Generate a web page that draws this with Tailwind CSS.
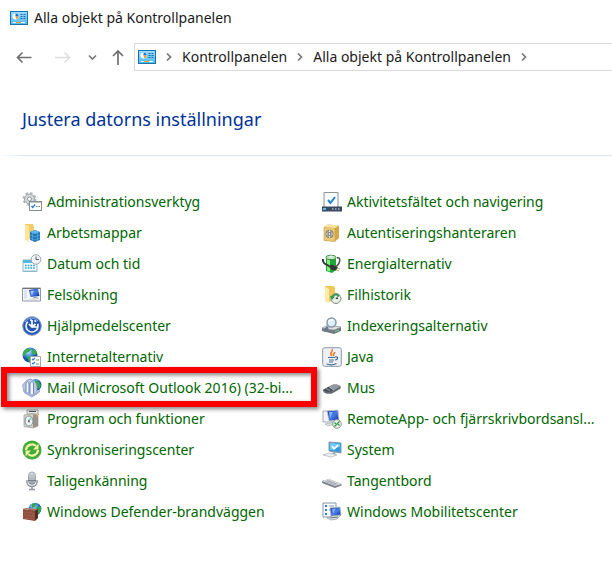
<!DOCTYPE html>
<html lang="sv">
<head>
<meta charset="utf-8">
<meta name="viewport" content="width=device-width, initial-scale=1">
<title>Alla objekt på Kontrollpanelen</title>
<script src="https://cdn.jsdelivr.net/npm/@tailwindcss/browser@4"></script>
</head>
<body class="min-h-screen overflow-x-hidden bg-white font-['Noto_Sans','Open_Sans',sans-serif] text-sm text-[#1a1a1a]">
<svg class="absolute h-0 w-0" aria-hidden="true">
  <defs>
    <linearGradient id="sky" x2="0" y2="1"><stop stop-color="#9bdcff"/><stop offset="1" stop-color="#55b9ef"/></linearGradient>
    <linearGradient id="screen" x2="1" y2="1"><stop stop-color="#0b2a9c"/><stop offset=".5" stop-color="#4a7fe6"/><stop offset="1" stop-color="#0a2aa5"/></linearGradient>
    <linearGradient id="steel" x2="0" y2="1"><stop stop-color="#f4f6f8"/><stop offset="1" stop-color="#8d959e"/></linearGradient>
    <radialGradient id="globe" cx=".4" cy=".3"><stop stop-color="#bfe6fb"/><stop offset=".6" stop-color="#3d8fd6"/><stop offset="1" stop-color="#15539f"/></radialGradient>
    <symbol id="panel" viewBox="0 0 18 14">
      <rect x=".5" y=".5" width="17" height="13" fill="url(#sky)" stroke="#1673ad"/>
      <circle cx="5.5" cy="5.5" r="3" fill="#fff"/><path d="M5.5 5.5V2.5a3 3 0 0 1 3 3z" fill="#1f6fd0"/><path d="M5.5 5.5h3a3 3 0 0 1-2 2.8z" fill="#ee9b21"/>
      <path d="M10.5 3.5h2m1 0h2m-5 2h2m1 0h2m-5 2h2m1 0h2" stroke="#176eaf"/>
      <path d="M3 11.5h3m5 0h4" stroke="#fff"/><path d="M6 11.5h5" stroke="#f3a11f"/>
    </symbol>
    <symbol id="chev" viewBox="0 0 6 10"><path d="M1 1.5 4.5 5 1 8.5" fill="none" stroke="#777" stroke-width="1.7"/></symbol>
  </defs>
</svg>

<header>
  <div class="flex h-9 items-center gap-1.5 pl-2.5">
    <svg class="h-3.5 w-[18px]"><use href="#panel"/></svg>
    <h1>Alla objekt på Kontrollpanelen</h1>
  </div>
  <nav class="flex items-center pt-[7px]" aria-label="Navigering">
    <button type="button" aria-label="Bakåt" class="ml-4"><svg class="h-4 w-4" viewBox="0 0 16 16" fill="none" stroke="#707070" stroke-width="1.7"><path d="M15.500 8.500H1.500M6.500 3.500l-5 5 5 5"/></svg></button>
    <button type="button" aria-label="Framåt" disabled class="ml-[23px]"><svg class="h-4 w-4" viewBox="0 0 16 16" fill="none" stroke="#dedede" stroke-width="1.7"><path d="M0 8.500h14M9.500 3.500l5 5-5 5"/></svg></button>
    <button type="button" aria-label="Tidigare platser" class="ml-[17px]"><svg class="h-4 w-2.5" viewBox="0 0 10 16" fill="none" stroke="#777" stroke-width="1.700"><path d="m1 6.500 3.500 3.500L8 6.500"/></svg></button>
    <button type="button" aria-label="Upp" class="ml-3.5"><svg class="h-4 w-3" viewBox="0 0 12 16" fill="none" stroke="#707070" stroke-width="1.7"><path d="M6 16V2M1 7l5-5 5 5"/></svg></button>
    <div class="ml-2.5 flex h-7 flex-1 items-center border border-r-0 border-[#d9d9d9] pl-[3px]">
      <svg class="h-3.5 w-[18px]"><use href="#panel"/></svg>
      <svg class="mx-2.5 h-2.5 w-1.5"><use href="#chev"/></svg>
      <a href="#">Kontrollpanelen</a>
      <svg class="mx-2.5 h-2.5 w-1.5"><use href="#chev"/></svg>
      <a href="#">Alla objekt på Kontrollpanelen</a>
      <svg class="mx-2.5 h-2.5 w-1.5"><use href="#chev"/></svg>
    </div>
  </nav>
</header>

<main>
  <h2 class="pl-[22px] pt-8 text-lg leading-8 text-[#003399]">Justera datorns inställningar</h2>
  <div class="mt-5 h-px bg-linear-to-r from-white to-[#d6e5f5] to-[24px]"></div>
  <ul class="grid grid-cols-[300px_1fr] whitespace-nowrap pl-[22px] pt-[30px] text-[#006600]">
    <li><a href="#" class="flex h-[31px] items-center gap-[5px]"><svg class="h-5 w-5 shrink-0" viewBox="0 0 20 20"><circle cx="7.500" cy="7" r="5" fill="#d3d7da" stroke="#9da4a9"/><circle cx="7.500" cy="7" r="6" fill="none" stroke="#aab0b5" stroke-width="1.800" stroke-dasharray="2.400 2.300"/><circle cx="7.500" cy="7" r="2" fill="#fff" stroke="#999"/><rect x="7.500" y="9.500" width="12" height="9" fill="#fff" stroke="#858d94"/><path d="M7.500 10h12" stroke="#858d94"/><path d="m9.500 14 1.200 1.500 2.300-3" fill="none" stroke="#247cc8" stroke-width="1.300"/><path d="M14 14.500h4" stroke="#777" stroke-dasharray="1.500 1"/></svg>Administrationsverktyg</a></li>
    <li><a href="#" class="flex h-[31px] items-center gap-[5px]"><svg class="h-5 w-5 shrink-0" viewBox="0 0 20 20"><path d="M2 .5h14v15H2z" fill="#fdfdfd" stroke="#8d949b"/><path d="m6 8 2.500 3L13 5" fill="none" stroke="#1785dc" stroke-width="2"/><path d="M0 14.500h20v5H0z" fill="#39495f"/><path d="M1 17h3" stroke="#6fb3ea" stroke-width="2"/><path d="M10 17h9" stroke="#a8b6c8" stroke-width="1.500" stroke-dasharray="1.500 1.500"/></svg>Aktivitetsfältet och navigering</a></li>
    <li><a href="#" class="flex h-[31px] items-center gap-[5px]"><svg class="h-5 w-5 shrink-0" viewBox="0 0 20 20"><path d="M3 1h8l1 3v11l-9 2z" fill="#f4cc68"/><path d="M3 1.500 7 3v16l-4-2.500z" fill="#ffe49a"/><path d="m8 9 5-2 5 2v8l-5 2-5-2z" fill="#1c78bd"/><path d="m8 9 5-2 5 2-5 2z" fill="#66b6e7"/><path d="m8 12 5 2 5-2M8 15l5 2 5-2M10.500 10v8m5-8v8" fill="none" stroke="#61acdd" stroke-width=".7"/></svg>Arbetsmappar</a></li>
    <li><a href="#" class="flex h-[31px] items-center gap-[5px]"><svg class="h-5 w-5 shrink-0" viewBox="0 0 20 20"><path d="m2 4 4-2.500 11 1V15l-4 3.500-11-1z" fill="#d3a948"/><path d="m2 4 11 1v13.500l-11-1z" fill="#e9ca78" stroke="#c79f4a" stroke-width=".6"/><path d="m2 4 4-2.500 11 1L13 5z" fill="#f8e5a6"/><circle cx="7.500" cy="11" r="3.800" fill="#b5b0a0" stroke="#777263" stroke-width=".8"/><circle cx="7.500" cy="11" r="1.500" fill="#eee" stroke="#555" stroke-width=".8"/><path d="M7.500 7v2m0 4v2m-4-4h2m4 0h2" stroke="#eee" stroke-width=".7"/></svg>Autentiseringshanteraren</a></li>
    <li><a href="#" class="flex h-[31px] items-center gap-[5px]"><svg class="h-5 w-5 shrink-0" viewBox="0 0 20 20"><path d="M1 6h14v11.500H1z" fill="#eefaff" stroke="#8cb9ca"/><path d="M1 6h14v3H1z" fill="#55b8dc"/><path d="M3 11.500h10m-10 2.500h10" stroke="#45a5cd" stroke-width="1.700" stroke-dasharray="1.700 1"/><path d="M2 16.500h12" stroke="#bedfea"/><circle cx="14" cy="5.500" r="4.800" fill="#f0f2f4" stroke="#9ea6ad"/><path d="M14 2.500v3h3" fill="none" stroke="#58616a"/></svg>Datum och tid</a></li>
    <li><a href="#" class="flex h-[31px] items-center gap-[5px]"><svg class="h-5 w-5 shrink-0" viewBox="0 0 20 20"><path d="M4 4.500 14 3v13l-4 3-6-2z" fill="#20a637"/><path d="M5 5v11.500l3 1V5z" fill="#83ec80"/><ellipse cx="9" cy="3.500" rx="5" ry="2.200" fill="#b9e6b7" stroke="#378644"/><ellipse cx="9" cy="2.600" rx="2" ry="1.200" fill="#e8eeea"/><path d="M1 5c-.5 4 2 5 6 7" fill="none" stroke="#303a34" stroke-width="2"/><path d="M15 4c4-2 4 6-2 9" fill="none" stroke="#4a544e" stroke-width="1.500"/><path d="m6 12 4-1.500 6 3-2 3-4-.5z" fill="#343936"/><path d="m15 14 3 1m-4 1 3 1" stroke="#c0b578" stroke-width="1.200"/></svg>Energialternativ</a></li>
    <li><a href="#" class="flex h-[31px] items-center gap-[5px]"><svg class="h-5 w-5 shrink-0" viewBox="0 0 20 20"><path d="M.5 3h18v13H.5z" fill="#f5f7f9" stroke="#8f979f"/><path d="M1 3.500h17" stroke="#68717b"/><path d="m7 5 9-1.500 1.500 7.500-9 1z" fill="url(#screen)"/><path d="m8 6 4-.5-2 5z" fill="#a4c4fa"/><path d="m11 12 3-.5 3 2-5 1z" fill="#9ca6b1"/><path d="m6 14 8-1 2 1-8 1.500z" fill="#dce1e6"/><path d="M2 5h3v9H2z" fill="#dce5ef"/></svg>Felsökning</a></li>
    <li><a href="#" class="flex h-[31px] items-center gap-[5px]"><svg class="h-5 w-5 shrink-0" viewBox="0 0 20 20"><path d="M3 1h9l1 2v13l-9 1z" fill="#efc75d"/><path d="M3 1.500 7 4v14l-4-2z" fill="#ffe9a6"/><circle cx="14" cy="13.500" r="5" fill="#e5eee8" stroke="#7f8d86"/><path d="M10 13a4 4 0 0 1 7-2" fill="none" stroke="#2d984a" stroke-width="1.700"/><path d="m8 11 5 .5-3 3.500z" fill="#2d984a"/><path d="M14 13.500 16.500 11M14 13.500h2" stroke="#444"/></svg>Filhistorik</a></li>
    <li><a href="#" class="flex h-[31px] items-center gap-[5px]"><svg class="h-5 w-5 shrink-0" viewBox="0 0 20 20"><circle cx="10" cy="10" r="9.300" fill="#2455b5" stroke="#8b9dbb"/><circle cx="10" cy="10" r="6" fill="none" stroke="#edf4ff" stroke-width="1.700" stroke-dasharray="23 2.500 2 2.500 2 2.500"/><path d="M10 4v7m-3-3 3 3 3.500-3M10 11h5" fill="none" stroke="#fff" stroke-width="1.700"/><path d="M3 6a8 8 0 0 1 13-1" fill="none" stroke="#88b6ee"/></svg>Hjälpmedelscenter</a></li>
    <li><a href="#" class="flex h-[31px] items-center gap-[5px]"><svg class="h-5 w-5 shrink-0" viewBox="0 0 20 20"><path d="m0 12 6-3 13 2v4l-7 3L0 15z" fill="#737b83"/><path d="m0 12 6-3 13 2-7 3z" fill="#dce1e5" stroke="#969da4" stroke-width=".6"/><path d="m13 15.500 4-1.500" stroke="#6ad084"/><path d="m6 11-4 4" stroke="#677a91" stroke-width="2.500"/><circle cx="9.500" cy="6.500" r="4.500" fill="#d9f0ff" stroke="#8797aa" stroke-width="1.500"/><path d="M7 6a3 3 0 0 1 4-2" fill="none" stroke="#fff" stroke-width="1.500"/></svg>Indexeringsalternativ</a></li>
    <li><a href="#" class="flex h-[31px] items-center gap-[5px]"><svg class="h-5 w-5 shrink-0" viewBox="0 0 20 20"><circle cx="8" cy="8" r="7.500" fill="url(#globe)"/><path d="M2 4c3-3 5-3 7-2L7 5 4 6 2 9C0 8 1 6 2 4zm3 5 5 1-1 4-2 1zm7-7c2 1 3 3 3 5l-3 1-2-3z" fill="#38ae45"/><path d="M8.500 9.500h10v10h-10z" fill="#fff" stroke="#a0a7ae"/><path d="m10 12 1 1 2-2m-3 5 1 1 2-2" fill="none" stroke="#267cc4" stroke-width="1.200"/><path d="M14 13h3m-3 4h3" stroke="#888"/></svg>Internetalternativ</a></li>
    <li><a href="#" class="flex h-[31px] items-center gap-[5px]"><svg class="h-5 w-5 shrink-0" viewBox="0 0 20 20"><rect x=".7" y=".7" width="18.600" height="18.600" rx="2" fill="#eef1f4" stroke="#8798aa"/><path d="M10 9C6 6 12 5 10 2m2 7c-2-2 1-3 1-4" fill="none" stroke="#ef7522" stroke-width="1.500"/><path d="M6 10.500h7m-6 2.500h5m-5 2h4M4.500 17c3 1 7 1 10-.5M13 10c4-1 3 3 0 3" fill="none" stroke="#416d93" stroke-width="1.200"/></svg>Java</a></li>
    <li class="relative"><a href="#" class="flex h-[31px] items-center gap-[5px]"><svg class="h-5 w-5 shrink-0" viewBox="0 0 20 20"><circle cx="13.500" cy="7" r="6" fill="url(#globe)"/><path d="m13 2 3 1 3 4-2 4-3-2-1-3z" fill="#3aa351"/><path d="M.5 7 5 2l4-1 5 4 1 4v7l-5 2.500L2 14z" fill="#b9c8e4" stroke="#8998b9" stroke-width=".7"/><path d="M4 14V6c.5-3 3-3 3 0v9M8 16V6c.5-3 3.500-3 3.500 0v10" fill="#f4f7fd" stroke="#7088bd"/><path d="m1 11 8 6 6-3 3-3v3l-8 5.500L2 15z" fill="#9db0d2"/></svg>Mail (Microsoft Outlook 2016) (32-bi...</a><div class="pointer-events-none absolute -bottom-1 -left-[21px] -top-[5px] right-[5px] border-6 border-[#fb0000] drop-shadow-[2px_2px_2px_rgba(0,0,0,0.5)]"></div></li>
    <li><a href="#" class="flex h-[31px] items-center gap-[5px]"><svg class="h-5 w-5 shrink-0" viewBox="0 0 20 20"><path d="m1 12 9-5c4-1 8 0 9 2l-1 2-8 4.500c-4 1-9 0-9-3.500z" fill="#646b73"/><path d="m1 12 9-5c4-1 7-.5 8 1.500l-8 5c-3 1-7 1-9-1.500z" fill="#8f979f"/><path d="m1 12 5.500-3.200 5 3.500-2 1.200c-3 1-7 .5-8.500-1.500z" fill="#444c55"/><path d="m6.500 8.500 5 3.500M4 10.500l4 2" stroke="#c1c6cc" stroke-width=".7"/></svg>Mus</a></li>
    <li><a href="#" class="flex h-[31px] items-center gap-[5px]"><svg class="h-5 w-5 shrink-0" viewBox="0 0 20 20"><path d="M5 1h11v4H5z" fill="#eee" stroke="#aaa"/><path d="M7 2.500h7" stroke="#555"/><path d="m2 6 9-1.500 5 2V17l-5 2-9-1.500z" fill="#d6d1c6" stroke="#999" stroke-width=".7"/><path d="m11 5 5 1.500V17l-5 2z" fill="#98938b"/><ellipse cx="7" cy="12" rx="4" ry="5" fill="#edf4f6" stroke="#7e929b"/><ellipse cx="7" cy="12" rx="1" ry="1.500" fill="#666"/><path d="m8 8 2 2-3 2" fill="#88cbbd"/><path d="m14 8 3-3" stroke="#f08d3d"/></svg>Program och funktioner</a></li>
    <li><a href="#" class="flex h-[31px] items-center gap-[5px]"><svg class="h-5 w-5 shrink-0" viewBox="0 0 20 20"><path d="M1 2h9v11H1z" fill="#f1f3f5" stroke="#a5adb5"/><path d="m5 2 11-1 1 10-10 1z" fill="url(#screen)" stroke="#c5ccd6" stroke-width=".7"/><path d="m7 3 4 0-3 6z" fill="#8cb4f7"/><path d="m3 15 9-2 2 2-8 2z" fill="#d9dee4" stroke="#9fa8b1" stroke-width=".6"/><circle cx="15" cy="15" r="4.300" fill="#e8efe9" stroke="#929d96"/><path d="m12.500 13.500 2 2-2 2m5-5-2 2 2 2" fill="none" stroke="#319845" stroke-width="1.200"/></svg>RemoteApp- och fjärrskrivbordsansl...</a></li>
    <li><a href="#" class="flex h-[31px] items-center gap-[5px]"><svg class="h-5 w-5 shrink-0" viewBox="0 0 20 20"><circle cx="10" cy="10" r="9.500" fill="#42aa38"/><path d="M4 10a6 6 0 0 1 10-4M16 10a6 6 0 0 1-10 4" fill="none" stroke="#f0f3a0" stroke-width="2.300"/><path d="M16.500 3.500v6H11zm-13 13v-6H9z" fill="#f0f3a0"/></svg>Synkroniseringscenter</a></li>
    <li><a href="#" class="flex h-[31px] items-center gap-[5px]"><svg class="h-5 w-5 shrink-0" viewBox="0 0 20 20"><path d="m7 2 12 1v10L7 11z" fill="#2f9edf" stroke="#8b98a4"/><path d="m8 3 10 1v3L8 10z" fill="#72c9f8"/><path d="m10 6 2 3 4-4" fill="none" stroke="#fff" stroke-width="1.600"/><path d="m11 12 3 .5-1 2-3-.5z" fill="#9da7b0"/><path d="m1 15 6-2 8 2-6 2z" fill="#eceff2" stroke="#adb4bb" stroke-width=".7"/></svg>System</a></li>
    <li><a href="#" class="flex h-[31px] items-center gap-[5px]"><svg class="h-5 w-5 shrink-0" viewBox="0 0 20 20"><path d="M5 9v2c0 6 10 6 10 0V9M10 15v3m-3 .5h6" fill="none" stroke="#8c939c" stroke-width="1.400"/><rect x="6.500" y="1" width="7" height="12.500" rx="3.500" fill="url(#steel)" stroke="#8d949d" stroke-width=".8"/><path d="M7 4h6M7 6h6M7 8h6M9 2v6m2-6v6" stroke="#adb3bb" stroke-width=".6"/><path d="M6 9.500h8" stroke="#747d88"/></svg>Taligenkänning</a></li>
    <li><a href="#" class="flex h-[31px] items-center gap-[5px]"><svg class="h-5 w-5 shrink-0" viewBox="0 0 20 20"><path d="m0 10 7-2 12.500 5v1.500L13 17 0 12z" fill="#7b838b"/><path d="m0 10 7-2 12.500 5-6.500 2z" fill="#dde1e4"/><path d="m3 10 11 4M5 9.300l11 4M5 11.500l4-2m-1 3.200 4-2m-1 3.200 4-2" stroke="#9aa1a8" stroke-width=".7"/></svg>Tangentbord</a></li>
    <li><a href="#" class="flex h-[31px] items-center gap-[5px]"><svg class="h-5 w-5 shrink-0" viewBox="0 0 20 20"><circle cx="13" cy="7" r="6.300" fill="url(#globe)"/><path d="m10 2 4-1-1 4-3 1zm5 3 3-1c2 3 1 6-2 8l-2-3z" fill="#35a347"/><path d="m1 7 12 1.500V19L1 17z" fill="#8d4c39"/><path d="m13 8.500 3-1.500v9l-3 3z" fill="#542c24"/><path d="m1 7 3-1 12 1-3 1.500z" fill="#b17661"/><path d="m1 10 12 1.500M1 13l12 1.500M1 16l12 1M5 8v2.500m4-1.500v2m-6 0v2.500m4-2v2.500m4-2v2.500m-6-.5V17m4-3v3" stroke="#a86c5a" stroke-width=".5"/></svg>Windows Defender-brandväggen</a></li>
    <li><a href="#" class="flex h-[31px] items-center gap-[5px]"><svg class="h-5 w-5 shrink-0" viewBox="0 0 20 20"><path d="M1 1h13v14H1z" fill="#f8fafc" stroke="#8799ac"/><path d="M3 4h2m-2 4h2m-2 4h2" stroke="#2d7fcf" stroke-width="2"/><path d="M7 4h5M7 8h5" stroke="#8d9aaa"/><path d="m8 6 10-1 1 8-10 1.500z" fill="url(#screen)" stroke="#aeb8c5" stroke-width=".7"/><path d="m10 7 4-.5-3 5z" fill="#86b0f6"/><path d="m5 16 5-2 9-1-4 4-6 1z" fill="#dfe3e8" stroke="#8f99a4" stroke-width=".7"/><path d="m8 16 8-1" stroke="#6b7580"/></svg>Windows Mobilitetscenter</a></li>
  </ul>
</main>
</body>
</html>
